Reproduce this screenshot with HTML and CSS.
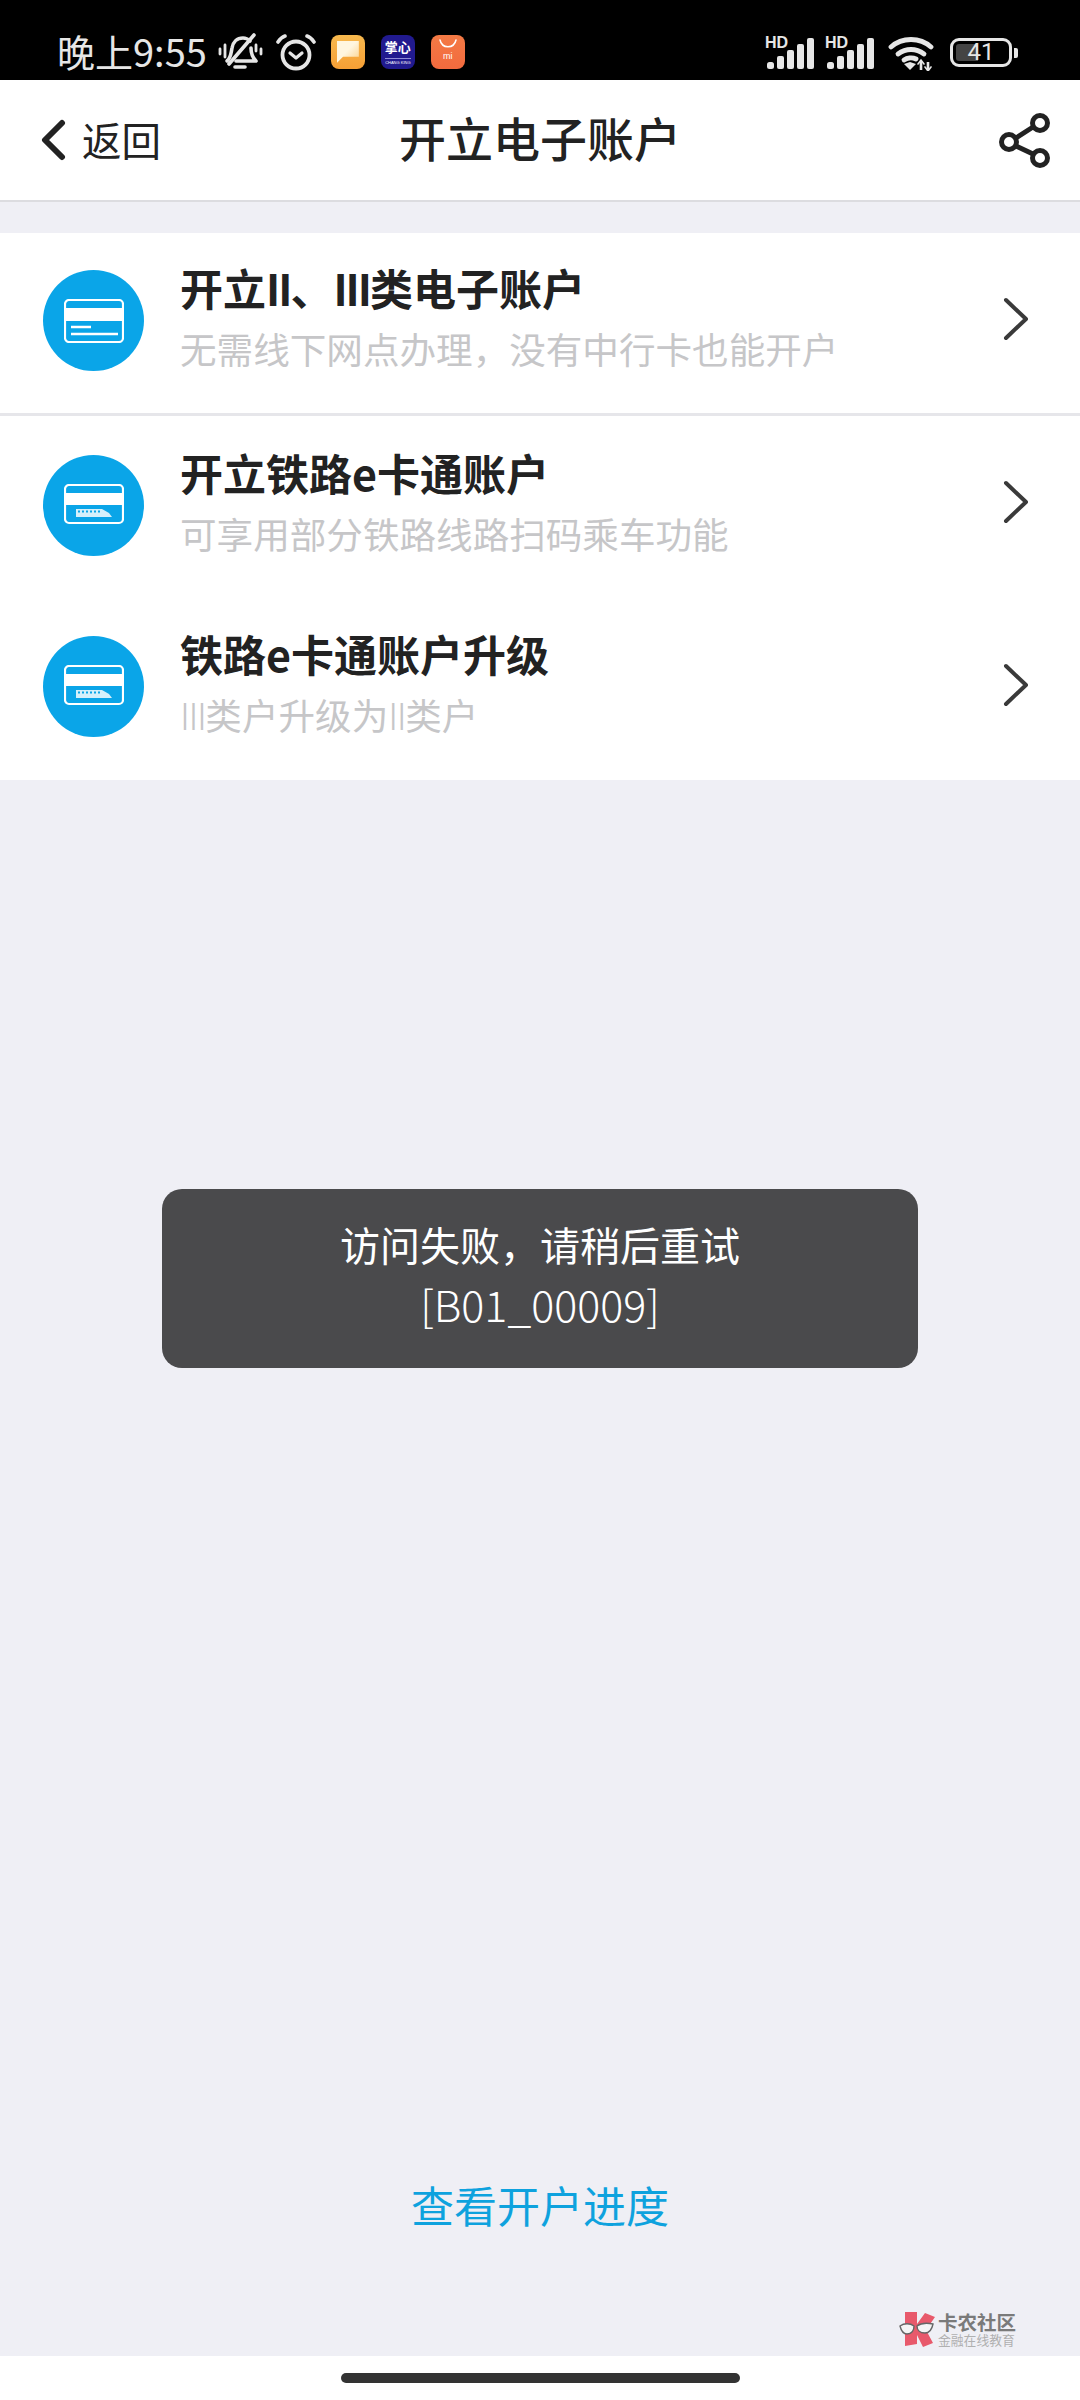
FILE: index.html
```html
<!DOCTYPE html>
<html>
  <head>
    <meta charset="utf-8" />
    <title>开立电子账户</title>
    <link rel="stylesheet" href="styles.css">
  </head>
  <body>
    <!-- status bar -->
    <div class="status-bar">
      <div class="status-left">
        <span class="time">晚上9:55</span>
        <svg class="ic-bell" width="45" height="37" viewBox="0 0 45 37" fill="none" stroke="#e6e6e6" stroke-width="3.6" stroke-linecap="round" stroke-linejoin="round">
          <path d="M9 28c4-3 4-8 5-13 1-6 5-10 11-10 3 0 5 1 7 3"/>
          <path d="M33 15c0 5 1 9 5 13H18"/>
          <path d="M36 2 11 31"/>
          <path d="M17 34h10"/>
          <path d="M2 16v5M7 12v12M38 12v6M43 16v5" stroke-width="2.8"/>
        </svg>
        <svg class="ic-alarm" width="40" height="38" viewBox="0 0 40 38" fill="none" stroke="#e6e6e6" stroke-linecap="round" stroke-linejoin="round">
          <circle cx="20" cy="22" r="13.5" stroke-width="3.8"/>
          <path d="M14 20l6 5 6-5" stroke-width="3.2"/>
          <path d="M2 9c2-3 4-5 7-6M38 9c-2-3-4-5-7-6" stroke-width="3.6"/>
        </svg>
        <span class="app app-note"><span class="note-sheet"></span></span>
        <span class="app app-zx">
          <span class="zx-name">掌心</span>
          <span class="zx-sub">CHANG KING</span>
        </span>
        <span class="app app-mi">
          <svg width="20" height="10" viewBox="0 0 20 10" fill="none" stroke="#fff" stroke-width="1.5" stroke-linecap="round"><path d="M2 1c2 9 14 9 16 0"/></svg>
          <span class="mi-text">mi</span>
        </span>
      </div>
      <div class="status-right">
        <div class="signal">
          <span class="hd">HD</span>
          <svg width="50" height="32" viewBox="0 0 50 32" fill="#e6e6e6">
            <rect x="2" y="24" width="7" height="7" rx="2.5"/><rect x="12" y="18" width="7" height="13" rx="2"/>
            <rect x="22" y="12" width="7" height="19" rx="2"/><rect x="32" y="6" width="7" height="25" rx="2"/>
            <rect x="42" y="0" width="7" height="31" rx="2"/>
          </svg>
        </div>
        <div class="signal">
          <span class="hd">HD</span>
          <svg width="50" height="32" viewBox="0 0 50 32" fill="#e6e6e6">
            <rect x="2" y="24" width="7" height="7" rx="2.5"/><rect x="12" y="18" width="7" height="13" rx="2"/>
            <rect x="22" y="12" width="7" height="19" rx="2"/><rect x="32" y="6" width="7" height="25" rx="2"/>
            <rect x="42" y="0" width="7" height="31" rx="2"/>
          </svg>
        </div>
        <svg class="ic-wifi" width="46" height="35" viewBox="0 0 46 35" fill="none" stroke="#e6e6e6" stroke-width="4.8" stroke-linecap="round">
          <path d="M3 11C14 1 32 1 43 11"/>
          <path d="M10 18c8-6 18-6 26 0"/>
          <path d="M16 24c3-2 8-3 12-1"/>
          <path d="M16 28l6-2 6 2-6 6z" fill="#e6e6e6" stroke="none"/>
          <path d="M33 34v-8M40 34v-8" stroke-width="2.6" stroke-linecap="butt"/>
          <path d="M30 28l3-4 3 4M37 31l3 4 3-4" stroke-width="1.6"/>
        </svg>
        <div class="battery">
          <div class="battery-body">
            <span class="battery-fill"></span>
            <span class="battery-num">41</span>
          </div>
          <span class="battery-nub"></span>
        </div>
      </div>
    </div>

    <!-- nav -->
    <div class="nav">
      <div class="back">
        <svg width="26" height="42" viewBox="0 0 26 42" fill="none" stroke="#222" stroke-width="6" stroke-linecap="round" stroke-linejoin="round"><path d="M22 4 5 21l17 17"/></svg>
        <span class="back-text">返回</span>
      </div>
      <div class="nav-title">开立电子账户</div>
      <svg class="share" width="54" height="56" viewBox="0 0 54 56" fill="none" stroke="#222" stroke-width="5">
        <circle cx="42" cy="11" r="7.5"/>
        <circle cx="11" cy="30" r="7.5"/>
        <circle cx="42" cy="46" r="7.5"/>
        <path d="M35 15 18 26M18 34l17 8"/>
      </svg>
    </div>

    <!-- list -->
    <div class="list">
      <div class="row row-one">
        <div class="badge">
          <svg width="60" height="44" viewBox="0 0 60 44" fill="none" stroke="#fff" stroke-width="2.2">
            <rect x="1" y="1" width="58" height="42" rx="4"/>
            <rect x="1" y="9" width="58" height="13" fill="#fff" stroke="none"/>
            <path d="M7 28h20M7 35h47" stroke-width="2.6"/>
          </svg>
        </div>
        <div class="row-text">
          <div class="row-title">开立<span class="latin">II</span>、<span class="latin">III</span>类电子账户</div>
          <div class="row-sub">无需线下网点办理，没有中行卡也能开户</div>
        </div>
        <svg class="arrow" width="28" height="44" viewBox="0 0 28 44" fill="none" stroke="#3a3a3a" stroke-width="4" stroke-linecap="round" stroke-linejoin="round"><path d="M4 3l20 19L4 41"/></svg>
      </div>
      <div class="row row-two">
        <div class="badge">
          <svg width="60" height="44" viewBox="0 0 60 44" fill="none" stroke="#fff" stroke-width="2.2">
            <rect x="1" y="1" width="58" height="38" rx="4"/>
            <rect x="1" y="9" width="58" height="12" fill="#fff" stroke="none"/>
            <path d="M12 25h26l7 4 3 4H12z" fill="#d5f0fb" stroke="none"/>
            <path d="M14 27.500h24" stroke="#0aa5e8" stroke-width="2" stroke-dasharray="2 2"/>
          </svg>
        </div>
        <div class="row-text">
          <div class="row-title">开立铁路e卡通账户</div>
          <div class="row-sub">可享用部分铁路线路扫码乘车功能</div>
        </div>
        <svg class="arrow" width="28" height="44" viewBox="0 0 28 44" fill="none" stroke="#3a3a3a" stroke-width="4" stroke-linecap="round" stroke-linejoin="round"><path d="M4 3l20 19L4 41"/></svg>
      </div>
      <div class="row row-three">
        <div class="badge">
          <svg width="60" height="44" viewBox="0 0 60 44" fill="none" stroke="#fff" stroke-width="2.2">
            <rect x="1" y="1" width="58" height="38" rx="4"/>
            <rect x="1" y="9" width="58" height="12" fill="#fff" stroke="none"/>
            <path d="M12 25h26l7 4 3 4H12z" fill="#d5f0fb" stroke="none"/>
            <path d="M14 27.500h24" stroke="#0aa5e8" stroke-width="2" stroke-dasharray="2 2"/>
          </svg>
        </div>
        <div class="row-text">
          <div class="row-title">铁路e卡通账户升级</div>
          <div class="row-sub"><span class="latin-thin">III</span>类户升级为<span class="latin-thin">II</span>类户</div>
        </div>
        <svg class="arrow" width="28" height="44" viewBox="0 0 28 44" fill="none" stroke="#3a3a3a" stroke-width="4" stroke-linecap="round" stroke-linejoin="round"><path d="M4 3l20 19L4 41"/></svg>
      </div>
    </div>

    <!-- main area, toast and link -->
    <div class="content">
      <div class="toast">
        <div>访问失败，请稍后重试</div>
        <div class="toast-code">[B01_00009]</div>
      </div>
      <div class="progress-link">查看开户进度</div>
      <div class="watermark">
        <svg width="36" height="36" viewBox="0 0 36 36">
          <path d="M6 1h12v12l8-11 10 4-9 13 7 13-10 4-6-12v9l-12 2z" fill="#e8596b"/>
          <path d="M1 15c4-3 10-3 14 0 0 4-2 8-7 8-4 0-6-4-7-8zM18 15c4-3 11-3 16-2-1 5-3 9-8 9s-8-3-8-7z" fill="#f4f4f4" stroke="#666" stroke-width="1.4"/>
        </svg>
        <div class="wm-text">
          <div class="wm-name">卡农社区</div>
          <div class="wm-sub">金融在线教育</div>
        </div>
      </div>
    </div>

    <!-- gesture bar -->
    <div class="home-bar"><span class="home-pill"></span></div>
  </body>
</html>
```

FILE: styles.css
```css
/* page */
body {
  margin: 0;
  width: 1080px;
  height: 2400px;
  display: flex;
  flex-direction: column;
  overflow: hidden;
  background-color: #efeff5;
  font-family: "Noto Sans CJK SC", "Noto Sans", sans-serif;
  color: #222;
}

/* status bar */
.status-bar {
  height: 80px;
  background-color: #000;
  color: #e6e6e6;
  display: flex;
  justify-content: space-between;
  box-sizing: border-box;
  padding: 33px 62px 0 57px;
}
.status-left {
  display: flex;
  align-items: flex-start;
}
.time {
  font-size: 38px;
  line-height: 36px;
  margin-right: 11px;
  white-space: nowrap;
}
.ic-bell {
  margin-right: 13px;
}
.ic-alarm {
  margin-right: 15px;
}
.app {
  width: 34px;
  height: 34px;
  border-radius: 8px;
  margin: 2px 16px 0 0;
  display: flex;
  flex-direction: column;
  align-items: center;
  overflow: hidden;
}
.app-note {
  background: linear-gradient(180deg, #f7b94e, #f69f35);
  justify-content: center;
}
.note-sheet {
  width: 22px;
  height: 22px;
  background: linear-gradient(135deg, #fff6e0 0 45%, #fbcf85 100%);
  clip-path: polygon(0 0, 100% 0, 100% 72%, 28% 72%, 0 100%);
}
.app-zx {
  background-color: #211a8f;
  color: #fff;
}
.zx-name {
  font-size: 13px;
  line-height: 23px;
  font-weight: 700;
}
.zx-sub {
  font-family: "Liberation Sans", sans-serif;
  font-size: 4px;
  line-height: 8px;
  border-top: 1px solid #8f8cd6;
  white-space: nowrap;
}
.app-mi {
  background: linear-gradient(180deg, #f47a45, #f26a3e);
  margin-right: 0;
  color: #fff;
}
.app-mi svg {
  margin-top: 4px;
}
.mi-text {
  font-family: "Liberation Sans", sans-serif;
  font-size: 9px;
  line-height: 14px;
}
.status-right {
  display: flex;
  align-items: flex-start;
}
.signal {
  width: 50px;
  height: 32px;
  position: relative;
  margin: 5px 10px 0 0;
}
.signal svg {
  display: block;
}
.hd {
  position: absolute;
  left: 0;
  top: -2px;
  font-family: "Liberation Sans", sans-serif;
  font-size: 16px;
  line-height: 14px;
  font-weight: 700;
}
.ic-wifi {
  margin: 3px 16px 0 3px;
}
.battery {
  display: flex;
  align-items: center;
  margin-top: 5px;
}
.battery-body {
  width: 62px;
  height: 29px;
  box-sizing: border-box;
  border: 3px solid #e6e6e6;
  border-radius: 9px;
  position: relative;
  padding: 3px;
  display: flex;
}
.battery-fill {
  width: 22px;
  background-color: #444;
  border-radius: 3px 0 0 3px;
}
.battery-num {
  position: absolute;
  left: 0;
  right: 0;
  top: -3px;
  text-align: center;
  font-family: "Roboto", sans-serif;
  font-size: 24px;
  line-height: 29px;
}
.battery-nub {
  width: 4px;
  height: 10px;
  margin-left: 2px;
  background-color: #e6e6e6;
  border-radius: 0 2px 2px 0;
}

/* nav */
.nav {
  height: 120px;
  background-color: #fff;
  border-bottom: 2px solid #dcdce0;
  display: flex;
  align-items: center;
  justify-content: space-between;
  padding: 0 28px 0 40px;
  position: relative;
}
.back {
  display: flex;
  align-items: center;
  gap: 16px;
  font-size: 39.5px;
  line-height: 42px;
}
.back-text {
  margin-top: -3px;
}
.nav-title {
  position: absolute;
  left: 0;
  right: 0;
  margin-top: -6px;
  text-align: center;
  font-size: 47px;
  line-height: 60px;
  font-weight: 500;
}

/* list */
.list {
  margin-top: 31px;
  background-color: #fff;
  height: 547px;
}
.row {
  display: flex;
  align-items: flex-start;
  box-sizing: border-box;
  padding-left: 43px;
  padding-right: 50px;
}
.row-one {
  height: 183px;
  padding-top: 37px;
  border-bottom: 3px solid #e6e6ea;
}
.row-two {
  height: 180px;
  padding-top: 39px;
}
.row-three {
  height: 184px;
  padding-top: 40px;
}
.badge {
  width: 101px;
  height: 101px;
  border-radius: 50%;
  background-color: #0aa5e8;
  display: flex;
  align-items: center;
  justify-content: center;
  flex-shrink: 0;
}
.row-text {
  flex: 1;
  margin-left: 36px;
}
.row-title {
  font-size: 43px;
  line-height: 44px;
  font-weight: 700;
  margin-top: -5px;
}
.latin {
  letter-spacing: -2px;
}
.row-sub {
  font-size: 36.6px;
  line-height: 44px;
  color: #c6c6c8;
  margin-top: 18px;
}
.latin-thin {
  letter-spacing: -1.5px;
  font-weight: 300;
}
.arrow {
  margin-top: 27px;
}
.row-two .arrow {
  margin-top: 25px;
}

/* main area */
.content {
  flex: 1;
  position: relative;
  display: flex;
  flex-direction: column;
  align-items: center;
}
.toast {
  width: 756px;
  height: 179px;
  margin-top: 409px;
  box-sizing: border-box;
  padding-top: 26px;
  background-color: #4a4a4c;
  border-radius: 20px;
  color: #fff;
  text-align: center;
  font-size: 40px;
  line-height: 59px;
}
.toast-code {
  font-size: 43px;
  font-weight: 300;
}
.progress-link {
  margin-top: 806px;
  font-size: 43px;
  line-height: 60px;
  color: #0ea2de;
}
.watermark {
  position: absolute;
  left: 899px;
  top: 1531px;
  display: flex;
  align-items: center;
  gap: 3px;
}
.wm-name {
  font-size: 19.5px;
  line-height: 22px;
  font-weight: 700;
  color: #7a7a7a;
}
.wm-sub {
  font-size: 12.8px;
  line-height: 14px;
  color: #b0b0b0;
}

/* gesture bar */
.home-bar {
  height: 44px;
  background-color: #fff;
  display: flex;
  justify-content: center;
  padding-top: 17px;
  box-sizing: border-box;
}
.home-pill {
  width: 399px;
  height: 10px;
  border-radius: 5px;
  background-color: #333;
}
```
